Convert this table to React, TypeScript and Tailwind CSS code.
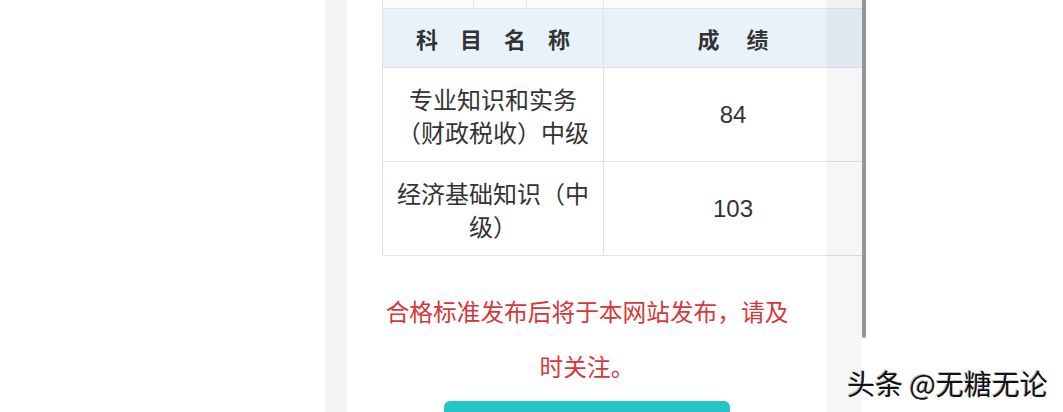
import React from 'react'

const cjk = "font-['Noto_Sans_CJK_SC','Noto_Sans',sans-serif]"

// one body row of the score table
function ScoreRow({ lines, score }: { lines: string[]; score: string }) {
    return (
        <div className="grid h-[94px] grid-cols-[222px_258px] border-b border-[#e2e2e2]">
            <div className="flex flex-col items-center justify-center border-l border-r border-[#e2e2e2] text-[24px] leading-[33px] text-[#333]">
                {lines.map((l) => (
                    <span key={l}>{l}</span>
                ))}
            </div>
            <div className="flex items-center justify-center font-['Liberation_Sans',sans-serif] text-[24px] text-[#333]">
                {score}
            </div>
        </div>
    )
}

export default function App() {
    return (
        <div className={`relative flex h-[412px] w-[1063px] overflow-hidden bg-white ${cjk}`}>
            <div className="w-[325px] shrink-0" />
            <div className="w-[22px] shrink-0 bg-[#f3f3f3]" />

            {/* page card */}
            <div className="relative w-[515px] shrink-0 pl-[35px]">
                <div className="w-[480px]">
                    {/* tail of the previous table */}
                    <div className="grid h-[9px] grid-cols-[92px_53px_77px_258px] border-b border-[#e2e2e2] bg-[#fdfafa]">
                        <div className="border-l border-r border-[#e6e6e6]" />
                        <div className="border-r border-[#e6e6e6]" />
                        <div className="border-r border-[#e6e6e6]" />
                        <div />
                    </div>
                    <div className="grid h-[59px] grid-cols-[222px_258px] border-b border-[#e2e2e2] bg-[#e9f2fb] text-[22px] font-bold text-[#333]">
                        <div className="flex items-center justify-center gap-[22px] border-l border-r border-[#e2e2e2]">
                            <span>科</span>
                            <span>目</span>
                            <span>名</span>
                            <span>称</span>
                        </div>
                        <div className="flex items-center justify-center gap-[27px]">
                            <span>成</span>
                            <span>绩</span>
                        </div>
                    </div>
                    <ScoreRow lines={['专业知识和实务', '（财政税收）中级']} score="84" />
                    <ScoreRow lines={['经济基础知识（中', '级）']} score="103" />
                </div>

                <div className="mt-[28px] w-[410px] text-center text-[23.7px] leading-[55px] text-[#d6383a]">
                    <p>合格标准发布后将于本网站发布，请及</p>
                    <p>时关注。</p>
                </div>
                <div className="ml-[62px] mt-[7px] h-[30px] w-[286px] rounded-md bg-[#25c5c6]" />

                {/* dimmed strip at the right edge */}
                <div className="absolute bottom-0 right-0 top-0 w-[36px] bg-black/[0.035]" />
            </div>

            {/* scrollbar */}
            <div className="h-[338px] w-[4px] shrink-0 rounded-b-full bg-[#959595]" />
            <div className="flex-1" />

            <div className="absolute left-[847px] top-[365px] text-[28px] leading-[36px] text-[#111] [text-shadow:1px_1px_0_#fff,-1px_-1px_0_#bbb]">
                头条 @无糖无论
            </div>
        </div>
    )
}
